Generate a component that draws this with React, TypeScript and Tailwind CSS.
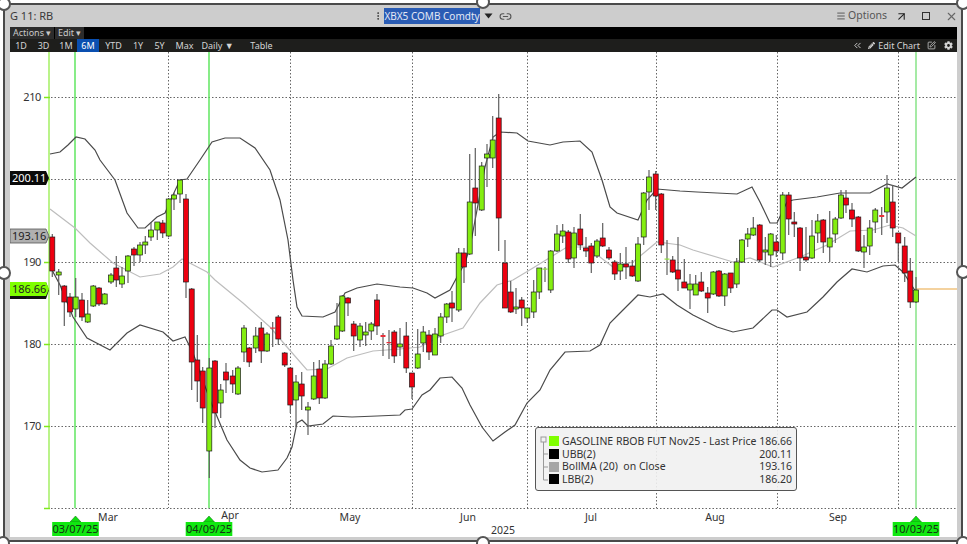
import { ArrowUpRight, ChevronsLeft, Link2, Menu, MoreVertical, SquarePen, X } from "lucide-react";
import { FaCog, FaPencilAlt } from "react-icons/fa";

type Candle = [number, "r" | "g" | "R" | "G", number, number, number, number];

// x, kind (capital = doji dash), body top, body bottom, wick top, wick bottom
const candles: Candle[] = [
  [52.3, "r", 237, 271, 234, 277], [58.7, "g", 272, 275, 269, 295], [64.3, "r", 286, 302, 285, 326],
  [70, "r", 297, 312, 293, 317], [75.7, "g", 297, 309, 278, 317], [82, "r", 300, 317, 293, 321],
  [87.7, "g", 314, 322, 300, 323], [93.3, "g", 286, 306, 285, 307], [99, "r", 288, 304, 287, 306],
  [104.7, "g", 294, 304, 293, 305], [111, "g", 275, 282, 273, 284], [116.3, "r", 268, 280, 256, 287],
  [122, "g", 276, 284, 267, 288], [128, "g", 256, 271, 255, 283], [134, "r", 249, 255, 247, 266],
  [140, "g", 245, 255, 242, 262], [145.3, "g", 242, 245, 236, 254], [151, "g", 230, 237, 222, 241],
  [157.3, "g", 222, 230, 222, 240], [162.7, "r", 223, 233, 220, 238], [168.7, "g", 199, 236, 198, 237],
  [174, "g", 195, 199, 193, 210], [180, "g", 180, 194, 180, 203], [186, "r", 199, 282, 194, 298],
  [191.7, "r", 289, 362, 288, 390], [197.3, "r", 360, 381, 335, 402], [202.7, "r", 371, 408, 367, 423],
  [209.3, "g", 368, 451, 358, 478], [215, "r", 361, 413, 360, 428], [220.7, "g", 390, 403, 384, 418],
  [226, "r", 372, 380, 363, 393], [232.7, "r", 376, 384, 370, 393], [238, "g", 368, 394, 366, 395],
  [244, "g", 328, 352, 325, 362], [249.3, "r", 348, 362, 347, 367], [255.7, "g", 336, 348, 327, 353],
  [261.3, "r", 328, 351, 322, 363], [267, "g", 334, 351, 332, 352], [272.7, "R", 327.5, 328.5, 322, 347],
  [278.3, "r", 317, 339, 315, 345], [284.7, "r", 353, 365, 352, 367], [290.3, "r", 368, 405, 367, 413],
  [296, "g", 382, 400, 375, 427], [301.7, "r", 384, 396, 372, 410], [308, "g", 407, 410, 402, 435],
  [313.7, "g", 376, 399, 362, 400], [319.3, "r", 369, 398, 360, 404], [325, "g", 364, 398, 360, 399],
  [331, "g", 346, 364, 340, 365], [337, "g", 326, 339, 303, 340], [342.3, "g", 296, 331, 295, 332],
  [348, "r", 298, 303, 297, 316], [353.7, "r", 324, 336, 321, 351], [360, "g", 326, 340, 323, 347],
  [365.7, "g", 332, 335, 322, 346], [371.3, "g", 324, 331, 322, 340], [377, "r", 300, 326, 294, 335],
  [383, "R", 335, 337, 333, 356], [389, "R", 342, 343, 330, 359], [394.3, "r", 332, 356, 330, 363],
  [400, "g", 344, 347, 328, 356], [406.3, "r", 336, 368, 322, 373], [412, "r", 373, 387, 373, 399],
  [417.7, "g", 354, 368, 329, 369], [423.3, "g", 332, 343, 326, 352], [429, "r", 335, 352, 330, 360],
  [435, "g", 334, 355, 328, 355], [440.7, "g", 317, 336, 313, 343], [446.7, "g", 304, 317, 303, 323],
  [452, "r", 303, 308, 291, 322], [458.7, "g", 253, 310, 248, 312], [464, "r", 253, 267, 248, 283],
  [469.7, "g", 202, 254, 154, 255], [475.3, "r", 188, 203, 148, 236], [481.7, "g", 166, 210, 162, 211],
  [487, "g", 154, 158, 144, 187], [492.7, "g", 140, 158, 116, 168], [498.7, "r", 118, 218, 94, 251],
  [505, "r", 263, 308, 240, 308], [510.7, "r", 292, 312, 281, 313], [516, "g", 307, 309, 288, 314],
  [521.7, "r", 300, 308, 297, 326], [527.3, "g", 308, 318, 308, 323], [533.7, "g", 292, 312, 280, 318],
  [539.3, "g", 268, 292, 268, 299], [545, "G", 268.5, 269.5, 267, 282], [550.7, "g", 251, 290, 250, 293],
  [557, "g", 234, 251, 225, 252], [562.7, "g", 231, 236, 224, 243], [568.3, "r", 232, 259, 230, 263],
  [574, "g", 233, 258, 227, 268], [580.3, "r", 229, 245, 214, 250], [586, "r", 248, 251, 237, 257],
  [591.3, "r", 246, 263, 243, 273], [597, "g", 241, 256, 239, 258], [602.7, "r", 238, 246, 223, 247],
  [609, "r", 250, 258, 247, 260], [614.7, "r", 262, 274, 260, 280], [620.3, "g", 264, 271, 253, 280],
  [626, "r", 264, 267, 247, 279], [632.3, "r", 266, 276, 260, 277], [638, "g", 244, 281, 237, 282],
  [643.7, "g", 193, 237, 192, 245], [649, "g", 177, 192, 170, 210], [655.7, "r", 174, 196, 171, 210],
  [661.3, "r", 194, 245, 193, 253], [667, "G", 258.5, 259.5, 240, 275], [672.7, "r", 260, 272, 256, 273],
  [678, "r", 270, 279, 237, 291], [684.3, "r", 282, 288, 259, 288], [690, "g", 284, 290, 274, 309],
  [695.7, "g", 284, 295, 275, 295], [701.3, "r", 282, 291, 272, 292], [707.7, "r", 293, 298, 287, 313],
  [713.3, "g", 272, 294, 271, 295], [719, "r", 271, 296, 270, 297], [724.7, "g", 274, 296, 273, 306],
  [730.7, "r", 273, 288, 273, 293], [736.7, "g", 262, 284, 258, 288], [742, "g", 240, 262, 239, 263],
  [747.7, "g", 234, 239, 228, 247], [753.3, "g", 228, 235, 217, 236], [759.7, "r", 225, 260, 224, 262],
  [765.3, "g", 250, 252, 237, 265], [770.7, "g", 234, 255, 233, 267], [776.3, "r", 242, 251, 235, 257],
  [782.7, "g", 195, 253, 192, 260], [788.7, "r", 195, 219, 192, 235], [794.3, "r", 222, 224, 212, 237],
  [800, "r", 228, 258, 227, 271], [806, "r", 257, 260, 227, 262], [812, "g", 236, 258, 220, 259],
  [817.7, "g", 221, 233, 214, 243], [823.3, "r", 220, 242, 219, 253], [829.7, "g", 238, 247, 211, 262],
  [835.3, "g", 219, 234, 217, 243], [841, "g", 195, 218, 190, 219], [846, "r", 198, 205, 190, 213],
  [852, "r", 210, 219, 203, 227], [858.3, "r", 217, 251, 216, 252], [864, "g", 247, 252, 235, 268],
  [869.7, "g", 228, 246, 220, 255], [875.3, "g", 210, 222, 208, 233], [881.7, "R", 215, 217, 207, 235],
  [887, "g", 188, 212, 175, 223], [892.7, "r", 202, 228, 185, 237], [898.3, "r", 233, 243, 233, 262],
  [904.7, "r", 246, 273, 237, 282], [910.3, "r", 271, 302, 258, 308], [916, "g", 290, 302, 277, 303],
];

const upperBand =
  "50,154 60,152 68,145 76,137 85,139 95,150 100,160 115,180 127,213 138,228 145,228 157,217 165,213 172,197 180,180 187,179 200,160 212,142 225,138 240,138 255,148 270,170 280,200 288,240 293,280 297,307 302,316 323,317 335,312 345,293 357,288 377,284 400,287 413,288 427,293 435,298 450,290 457,277 465,263 470,247 477,210 485,167 493,137 500,132 517,133 528,141 550,145 563,142 580,141 592,152 602,180 610,207 617,213 638,220 647,200 657,189 680,191 697,192 737,194 752,187 760,202 770,223 777,223 787,202 793,200 817,197 840,193 870,193 887,184 902,188 916,177";
const midBand =
  "50,209 75,228 90,243 113,263 140,277 160,274 173,267 182,259 207,272 215,280 243,303 270,327 287,347 307,370 327,369 347,358 373,351 400,349 420,347 443,335 463,328 480,303 497,285 513,280 533,268 567,247 587,247 613,267 633,262 657,242 680,245 693,250 733,262 750,258 773,267 800,257 827,245 850,231 873,230 890,225 903,228 916,236";
const lowerBand =
  "52,270 60,285 73,317 87,338 110,350 127,333 140,325 163,332 173,341 185,337 193,353 210,400 227,440 240,460 250,468 262,472 278,470 287,458 292,447 297,423 302,420 308,426 323,424 333,416 352,417 377,416 400,415 405,410 412,409 422,395 430,390 440,378 452,377 462,388 470,405 482,427 493,441 505,432 515,425 527,403 540,390 550,370 565,352 590,351 600,345 610,323 620,313 630,303 638,295 650,297 663,294 677,305 693,315 717,327 733,332 753,328 772,310 777,310 787,317 807,312 823,297 837,282 852,269 867,272 883,266 895,265 903,272 916,292";

const hLines = [97.5, 179.5, 262.5, 344.5, 426.5, 508.5];
const vLines = [168.5, 290.5, 412.5, 527.5, 656.5, 777.5, 898.5];
const priceLabels: [string, number][] = [["210", 97], ["190", 262], ["180", 344], ["170", 426]];
const months: [string, number, number][] = [
  ["Mar", 108, 520.5], ["Apr", 230, 519], ["May", 350, 520.5], ["Jun", 468, 520.5],
  ["Jul", 591, 520.5], ["Aug", 715, 520.5], ["Sep", 838, 520.5],
];
const dateTags: [string, number][] = [["03/07/25", 75.5], ["04/09/25", 209], ["10/03/25", 916]];

const ranges: [string, string][] = [
  ["1D", "w-[22px]"], ["3D", "w-[23px]"], ["1M", "w-[22px]"], ["6M", "w-[22px] bg-[#0a4fb0] text-white"], ["YTD", "w-[29px]"],
  ["1Y", "w-[20px]"], ["5Y", "w-[23px]"], ["Max", "w-[27px]"], ["Daily ▼", "w-[39px]"], ["Table", "w-[49px]"],
];

const legendRows: [string, string, string][] = [
  ["bg-[#7fff00]", "GASOLINE RBOB FUT Nov25 - Last Price", "186.66"],
  ["bg-black", "UBB(2)", "200.11"],
  ["bg-[#a6a6a6]", "BollMA (20)  on Close", "193.16"],
  ["bg-black", "LBB(2)", "186.20"],
];

const handles = [
  "left-[-3px] top-[-3px]", "left-[476px] top-[-5px]", "left-[956px] top-[-4px]",
  "left-[-3px] top-[266px]", "left-[956px] top-[265px]",
  "left-[-4px] top-[536px]", "left-[476px] top-[536px]", "left-[956px] top-[536px]",
];

function Chart() {
  return (
    <svg viewBox="10 52 947 485" width={947} height={485} className="block bg-white">
      {hLines.map((y) => (
        <line key={y} x1={44} x2={957} y1={y} y2={y} stroke="#666" strokeDasharray="1.5 2" />
      ))}
      {vLines.map((x) => (
        <line key={x} x1={x} x2={x} y1={52} y2={508} stroke="#666" strokeDasharray="1.5 2" />
      ))}

      <line x1={49} x2={49} y1={52} y2={508} stroke="#9dee58" strokeWidth={1.4} />
      <line x1={75} x2={75} y1={52} y2={508} stroke="#55e455" strokeWidth={1.4} />
      <line x1={209} x2={209} y1={52} y2={508} stroke="#55e455" strokeWidth={1.4} />
      <line x1={916} x2={916} y1={52} y2={508} stroke="#a5eaa5" strokeWidth={2} />
      {hLines.map((y) => (
        <line key={y} x1={44} x2={50} y1={y} y2={y} stroke="#7fe81e" strokeWidth={1.5} />
      ))}

      <polyline points={midBand} fill="none" stroke="#bdbdbd" strokeWidth={1.2} />
      <polyline points={upperBand} fill="none" stroke="#4a4a4a" strokeWidth={1.2} />
      <polyline points={lowerBand} fill="none" stroke="#4a4a4a" strokeWidth={1.2} />
      <line x1={916} x2={957} y1={289} y2={289} stroke="#e9a53f" />

      {candles.map(([x, kind, top, bot, wickTop, wickBot]) => {
        const doji = kind === "R" || kind === "G";
        const red = kind === "r" || kind === "R";
        return (
          <g key={x}>
            <line x1={x} x2={x} y1={wickTop} y2={wickBot} stroke="#5f5f5f" strokeWidth={1.2} />
            {doji ? (
              <rect x={x - 2.5} y={top} width={5} height={Math.max(bot - top, 1.2)} fill={red ? "#e8303a" : "#8fe23c"} />
            ) : (
              <rect
                x={x - 2.5}
                y={top}
                width={5}
                height={bot - top}
                fill={red ? "#ee0010" : "#84ee10"}
                stroke="#1c1c1c"
                strokeWidth={0.7}
              />
            )}
          </g>
        );
      })}

      {priceLabels.map(([label, y]) => (
        <text key={label} x={41} y={y + 4} textAnchor="end" fontSize={11} letterSpacing={-0.4} fill="#333">
          {label}
        </text>
      ))}

      <polygon points="10,171 46,171 49,178 46,185 10,185" fill="#0a0a0a" />
      <text x={12} y={182} fontSize={11} fill="#fff">200.11</text>
      <polygon points="10,229 46,229 49,236 46,243 10,243" fill="#b0b0b0" stroke="#555" strokeWidth={0.8} />
      <text x={12} y={240} fontSize={11} fill="#222">193.16</text>
      <polygon points="10,282 46,282 49,290 46,299 10,299" fill="#111" />
      <polygon points="10,282 46,282 49,289 46,296 10,296" fill="#7fff00" />
      <text x={12} y={293} fontSize={11} fill="#222">186.66</text>

      {months.map(([label, x, y]) => (
        <text key={label} x={x} y={y} textAnchor="middle" fontSize={10.5} fill="#333">
          {label}
        </text>
      ))}
      <text x={503} y={534} textAnchor="middle" fontSize={10.5} fill="#333">2025</text>

      {dateTags.map(([label, x]) => (
        <g key={label}>
          <polygon points={`${x},516 ${x - 5.5},522 ${x + 5.5},522`} fill="#10e010" stroke="#0a6a0a" strokeWidth={0.5} />
          <rect x={x - 23.3} y={522} width={46.6} height={14} fill="#10e810" />
          <text x={x} y={533} textAnchor="middle" fontSize={11} fill="#143014">
            {label}
          </text>
        </g>
      ))}
    </svg>
  );
}

function Legend() {
  return (
    <div className="absolute left-[525px] top-[375px] flex h-[64px] w-[262px] flex-col rounded-[3px] border-[1.5px] border-[#555] bg-[#f1f1f1]/90 pl-[13px] pr-[4px] pt-[7px] text-[10.5px] leading-[12.7px] text-[#333]">
      <svg className="absolute left-[4px] top-[7px]" width={9} height={50}>
        <rect x={1} y={2} width={5} height={5} fill="none" stroke="#999" />
        <path d="M3.5 7V45H8M3.5 19H8M3.5 32H8" fill="none" stroke="#999" />
      </svg>
      {legendRows.map(([swatch, label, value]) => (
        <div key={label} className="flex items-center">
          <span className={`mr-[3px] h-[10px] w-[10px] shrink-0 ${swatch}`} />
          <span className="whitespace-pre">{label}</span>
          <span className="ml-auto">{value}</span>
        </div>
      ))}
    </div>
  );
}

export default function App() {
  return (
    <div className="relative h-[544px] w-[967px] overflow-hidden bg-white font-['Noto_Sans',sans-serif]">
      <div className="ml-[3px] mt-[3px] flex h-[539px] w-[960px] flex-col border-2 border-[#4a4a4a] bg-[#cdcdcd]">
        <div className="flex h-[22px] items-center pl-[5px] pr-[3px] text-[11px] text-[#3a3a3a]">
          <span className="w-[363px]">G 11: RB</span>
          <MoreVertical size={10} className="mr-[1px] text-[#333]" />
          <span className="flex h-[16px] w-[96px] items-center justify-center bg-[#2a5cb4] text-[10px] whitespace-nowrap text-[#e4e8f4]">
            XBX5 COMB Comdty
          </span>
          <svg width={9} height={6} viewBox="0 0 9 6" className="ml-[4px] text-[#222]">
            <path d="M0.5 0.5H8.5L4.5 5.5Z" fill="currentColor" />
          </svg>
          <Link2 size={13} className="ml-[6px] text-[#555]" />
          <div className="ml-auto flex items-center">
            <Menu size={10} className="mr-[2px] text-[#444]" />
            <span className="w-[46px] text-[10.5px] text-[#555]">Options</span>
            <ArrowUpRight size={13} className="ml-[1px] text-[#222]" />
            <span className="ml-[14px] h-[8px] w-[8px] border-[1.5px] border-[#333]" />
            <X size={13} className="ml-[15px] text-[#666]" />
          </div>
        </div>

        <div className="flex flex-col pl-[5px] pr-[4px]">
          <div className="flex h-[12px] bg-black text-[9px] leading-[12px] text-[#c8c8c8]">
            <span className="w-[44px] bg-[#2c2c2c] pl-[3px]">Actions ▾</span>
            <span className="ml-[1px] w-[29px] bg-[#2c2c2c] pl-[3px]">Edit ▾</span>
          </div>
          <div className="flex h-[13px] items-center bg-[#1e1e1c] text-[9px] leading-[13px] text-[#d4d4d4]">
            {ranges.map(([label, width]) => (
              <span key={label} className={`text-center whitespace-nowrap ${width}`}>
                {label}
              </span>
            ))}
            <div className="ml-auto flex items-center pr-[4px]">
              <ChevronsLeft size={11} className="mr-[5px]" />
              <FaPencilAlt size={7} className="mr-[3px]" />
              <span className="mr-[7px] text-[9px]">Edit Chart</span>
              <SquarePen size={9} className="mr-[8px]" />
              <FaCog size={9} />
            </div>
          </div>
          <div className="relative">
            <Chart />
            <Legend />
          </div>
        </div>
      </div>

      {handles.map((pos) => (
        <span key={pos} className={`absolute h-[14px] w-[14px] rounded-full border-[2.5px] border-[#555] bg-white ${pos}`} />
      ))}
    </div>
  );
}
